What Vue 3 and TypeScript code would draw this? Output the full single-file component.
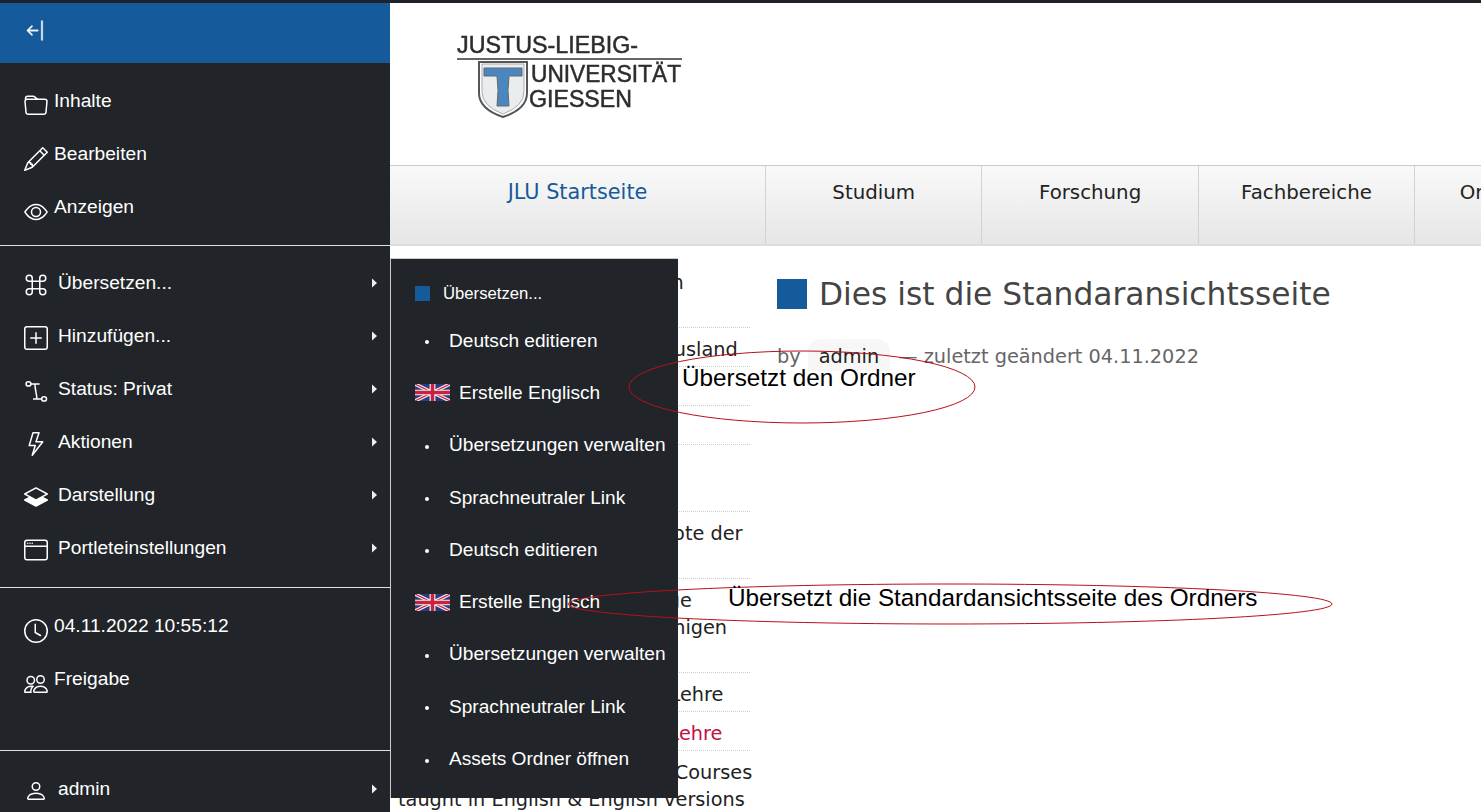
<script setup lang="ts">
interface NavItem { label: string; paths: string[]; caret?: boolean; wide?: boolean; stroke?: boolean }
interface SubItem { label: string; flag?: boolean }
interface SideItem { lines: string[]; red?: boolean }

const folder = ['M.54 3.87.5 3a2 2 0 0 1 2-2h3.672a2 2 0 0 1 1.414.586l.828.828A2 2 0 0 0 9.828 3h3.982a2 2 0 0 1 1.992 2.181l-.637 7A2 2 0 0 1 13.174 14H2.826a2 2 0 0 1-1.991-1.819l-.637-7a1.99 1.99 0 0 1 .342-1.31zM2.19 4a1 1 0 0 0-.996 1.09l.637 7a1 1 0 0 0 .995.91h10.348a1 1 0 0 0 .995-.91l.637-7A1 1 0 0 0 13.81 4H2.19zm4.69-1.707A1 1 0 0 0 6.172 2H2.5a1 1 0 0 0-1 .981l.006.139C1.72 3.042 1.95 3 2.19 3h5.396l-.707-.707z']
const pencil = ['M12.146.146a.5.5 0 0 1 .708 0l3 3a.5.5 0 0 1 0 .708l-10 10a.5.5 0 0 1-.168.11l-5 2a.5.5 0 0 1-.65-.65l2-5a.5.5 0 0 1 .11-.168l10-10zM11.207 2.5 13.5 4.793 14.793 3.5 12.5 1.207 11.207 2.5zm1.586 3L10.5 3.207 4 9.707V10h.5a.5.5 0 0 1 .5.5v.5h.5a.5.5 0 0 1 .5.5v.5h.293l6.5-6.5zm-9.761 5.175-.106.106-1.528 3.821 3.821-1.528.106-.106A.5.5 0 0 1 5 12.5V12h-.5a.5.5 0 0 1-.5-.5V11h-.5a.5.5 0 0 1-.468-.325z']
const eye = ['M16 8s-3-5.5-8-5.5S0 8 0 8s3 5.5 8 5.5S16 8 16 8zM1.173 8a13.133 13.133 0 0 1 1.66-2.043C4.12 4.668 5.88 3.5 8 3.5c2.12 0 3.879 1.168 5.168 2.457A13.133 13.133 0 0 1 14.828 8c-.058.087-.122.183-.195.288-.335.48-.83 1.12-1.465 1.755C11.879 11.332 10.119 12.5 8 12.5c-2.12 0-3.879-1.168-5.168-2.457A13.134 13.134 0 0 1 1.172 8z', 'M8 5.5a2.5 2.5 0 1 0 0 5 2.5 2.5 0 0 0 0-5zM4.5 8a3.5 3.5 0 1 1 7 0 3.5 3.5 0 0 1-7 0z']
const command = ['M3.5 2A1.5 1.5 0 0 1 5 3.5V5H3.5a1.5 1.5 0 1 1 0-3zM6 5V3.5A2.5 2.5 0 1 0 3.5 6H5v4H3.5A2.5 2.5 0 1 0 6 12.5V11h4v1.5a2.5 2.5 0 1 0 2.5-2.5H11V6h1.5A2.5 2.5 0 1 0 10 3.5V5H6zm4 1v4H6V6h4zm1-1V3.5A1.5 1.5 0 1 1 12.5 5H11zm0 6h1.5a1.5 1.5 0 1 1-1.5 1.5V11zm-6 0v1.5A1.5 1.5 0 1 1 3.5 11H5z']
const plus = ['M14 1a1 1 0 0 1 1 1v12a1 1 0 0 1-1 1H2a1 1 0 0 1-1-1V2a1 1 0 0 1 1-1h12zM2 0a2 2 0 0 0-2 2v12a2 2 0 0 0 2 2h12a2 2 0 0 0 2-2V2a2 2 0 0 0-2-2H2z', 'M8 4a.5.5 0 0 1 .5.5v3h3a.5.5 0 0 1 0 1h-3v3a.5.5 0 0 1-1 0v-3h-3a.5.5 0 0 1 0-1h3v-3A.5.5 0 0 1 8 4z']
const status = ['M4.6 3.3H10.4M7.3 3.3C7.3 7 8.4 9.5 8.6 13.3M6 13.3H12', 'M4.6 3.3a1.6 1.4 0 1 1-3.2 0a1.6 1.4 0 1 1 3.2 0ZM15 13.3a1.6 1.4 0 1 1-3.2 0a1.6 1.4 0 1 1 3.2 0Z']
const lightning = ['M5.52.359A.5.5 0 0 1 6 0h4a.5.5 0 0 1 .474.658L8.694 6H12.5a.5.5 0 0 1 .395.807l-7 9a.5.5 0 0 1-.873-.454L6.823 9.5H3.5a.5.5 0 0 1-.48-.641l2.5-8.5zM6.374 1 4.168 8.5H7.5a.5.5 0 0 1 .478.647L6.78 13.04 11.478 7H8a.5.5 0 0 1-.474-.658L9.306 1H6.374z']
const layers = ['M8.235 1.559a.5.5 0 0 0-.47 0l-7.5 4a.5.5 0 0 0 0 .882L3.188 8 .264 9.559a.5.5 0 0 0 0 .882l7.5 4a.5.5 0 0 0 .47 0l7.5-4a.5.5 0 0 0 0-.882L12.813 8l2.922-1.559a.5.5 0 0 0 0-.882l-7.5-4zM8 9.433 1.562 6 8 2.567 14.438 6 8 9.433z']
const windowIcon = ['M2.5 4a.5.5 0 1 0 0-1 .5.5 0 0 0 0 1zm2-.5a.5.5 0 1 1-1 0 .5.5 0 0 1 1 0zm1 .5a.5.5 0 1 0 0-1 .5.5 0 0 0 0 1z', 'M2 1a2 2 0 0 0-2 2v10a2 2 0 0 0 2 2h12a2 2 0 0 0 2-2V3a2 2 0 0 0-2-2H2zm13 2v2H1V3a1 1 0 0 1 1-1h12a1 1 0 0 1 1 1zM2 14a1 1 0 0 1-1-1V6h14v7a1 1 0 0 1-1 1H2z']
const clock = ['M8 3.5a.5.5 0 0 0-1 0V9a.5.5 0 0 0 .252.434l3.5 2a.5.5 0 0 0 .496-.868L8 8.71V3.5z', 'M8 16A8 8 0 1 0 8 0a8 8 0 0 0 0 16zm7-8A7 7 0 1 1 1 8a7 7 0 0 1 14 0z']
const people = ['M15 14s1 0 1-1-1-4-5-4-5 3-5 4 1 1 1 1h8Zm-7.978-1A.261.261 0 0 1 7 12.996c.001-.264.167-1.03.76-1.72C8.312 10.629 9.282 10 11 10c1.717 0 2.687.63 3.24 1.276.593.69.758 1.457.76 1.72l-.008.002a.274.274 0 0 1-.014.002H7.022ZM11 7a2 2 0 1 0 0-4 2 2 0 0 0 0 4Zm3-2a3 3 0 1 1-6 0 3 3 0 0 1 6 0ZM6.936 9.28a5.88 5.88 0 0 0-1.23-.247A7.35 7.35 0 0 0 5 9c-4 0-5 3-5 4 0 .667.333 1 1 1h4.216A2.238 2.238 0 0 1 5 13c0-1.01.377-2.042 1.09-2.904.243-.294.526-.569.846-.816ZM4.92 10A5.493 5.493 0 0 0 4 13H1c0-.26.164-1.03.76-1.724.545-.636 1.492-1.256 3.16-1.275ZM1.5 5.5a3 3 0 1 1 6 0 3 3 0 0 1-6 0Zm3-2a2 2 0 1 0 0 4 2 2 0 0 0 0-4Z']
const person = ['M8 8a3 3 0 1 0 0-6 3 3 0 0 0 0 6Zm2-3a2 2 0 1 1-4 0 2 2 0 0 1 4 0Zm4 8c0 1-1 1-1 1H3s-1 0-1-1 1-4 6-4 6 3 6 4Zm-1-.004c-.001-.246-.154-.986-.832-1.664C11.516 10.68 10.289 10 8 10c-2.29 0-3.516.68-4.168 1.332-.678.678-.83 1.418-.832 1.664h10Z']

const sections: { cls: string; items: NavItem[] }[] = [
  { cls: 'sec-a', items: [
    { label: 'Inhalte', paths: folder },
    { label: 'Bearbeiten', paths: pencil },
    { label: 'Anzeigen', paths: eye },
  ] },
  { cls: 'sec-b', items: [
    { label: 'Übersetzen...', paths: command, caret: true, wide: true },
    { label: 'Hinzufügen...', paths: plus, caret: true, wide: true },
    { label: 'Status: Privat', paths: status, caret: true, wide: true, stroke: true },
    { label: 'Aktionen', paths: lightning, caret: true, wide: true },
    { label: 'Darstellung', paths: layers, caret: true, wide: true },
    { label: 'Portleteinstellungen', paths: windowIcon, caret: true, wide: true },
  ] },
  { cls: 'sec-c', items: [
    { label: '04.11.2022 10:55:12', paths: clock },
    { label: 'Freigabe', paths: people },
  ] },
  { cls: 'sec-d', items: [
    { label: 'admin', paths: person, caret: true, wide: true },
  ] },
]

const subItems: SubItem[] = [
  { label: 'Deutsch editieren' },
  { label: 'Erstelle Englisch', flag: true },
  { label: 'Übersetzungen verwalten' },
  { label: 'Sprachneutraler Link' },
  { label: 'Deutsch editieren' },
  { label: 'Erstelle Englisch', flag: true },
  { label: 'Übersetzungen verwalten' },
  { label: 'Sprachneutraler Link' },
  { label: 'Assets Ordner öffnen' },
]

const sideItems: SideItem[] = [
  { lines: ['Studienort und Informationen', 'für Studierende'] },
  { lines: ['Studium und Praktikum im Ausland'] },
  { lines: ['Studienfächer'] },
  { lines: ['Bewerbung'] },
  { lines: ['Hochschulstandort Gießen', 'und Umgebung'] },
  { lines: ['Internationale Studienangebote der', 'Universität'] },
  { lines: ['Internationales Studienkollege', 'Ein Studienangebot für diejenigen', 'die weiterstudieren'] },
  { lines: ['Qualitätsentwicklung in der Lehre'] },
  { lines: ['Innovationen im Studium & Lehre'], red: true },
  { lines: ["Bachelor's Programmes and Courses", 'taught in English & English versions'] },
]

const tabs: string[] = ['JLU Startseite', 'Studium', 'Forschung', 'Fachbereiche', 'Organisation']
</script>

<template>
  <div class="page">
    <aside class="sidebar">
      <div class="collapse">
        <svg class="back" viewBox="0 0 16 16" fill="currentColor" stroke="currentColor" stroke-width="0.3"><path d="M12.5 15a.5.5 0 0 1-.5-.5v-13a.5.5 0 0 1 1 0v13a.5.5 0 0 1-.5.5ZM10 8a.5.5 0 0 1-.5.5H3.707l2.147 2.146a.5.5 0 0 1-.708.708l-3-3a.5.5 0 0 1 0-.708l3-3a.5.5 0 1 1 .708.708L3.707 7.5H9.5a.5.5 0 0 1 .5.5Z"/></svg>
      </div>
      <nav v-for="sec in sections" :key="sec.cls" class="section" :class="sec.cls">
        <a v-for="item in sec.items" :key="item.label" class="nav-item" :class="{ wide: item.wide }">
          <svg class="icon" viewBox="0 0 16 16" :fill="item.stroke ? 'none' : 'currentColor'" :stroke="item.stroke ? 'currentColor' : 'none'" :stroke-width="item.stroke ? 1 : 0">
            <path v-for="(d, i) in item.paths" :key="i" :d="d" />
          </svg>
          <span class="nav-label">{{ item.label }}</span>
          <svg v-if="item.caret" class="caret" viewBox="0 0 5 10" fill="currentColor"><path d="M0 0.4 5 5 0 9.6Z"/></svg>
        </a>
      </nav>
    </aside>

    <main class="main">
      <header class="brand">
        <svg class="logo" width="226" height="84" viewBox="0 0 226 84">
          <text x="0" y="18" class="logo-text" textLength="181" lengthAdjust="spacingAndGlyphs">JUSTUS-LIEBIG-</text>
          <rect x="0" y="23" width="225" height="2" fill="#666" />
          <path d="M22 27H70V58Q70 74 46 82Q22 74 22 58Z" fill="#fff" stroke="#555" stroke-width="2" />
          <path d="M25 29H67V57Q67 71 46 79Q25 71 25 57Z" fill="#e9edf0" stroke="#aaa" stroke-width="1" />
          <path d="M27 33H65V41H52Q50 55 52 71H40Q42 55 40 41H27Z" fill="#4a86c0" stroke="#666" stroke-width="1" />
          <text x="74" y="47" class="logo-text" textLength="150" lengthAdjust="spacingAndGlyphs">UNIVERSITÄT</text>
          <text x="72" y="72" class="logo-text" textLength="103" lengthAdjust="spacingAndGlyphs">GIESSEN</text>
        </svg>
      </header>

      <div class="tabs">
        <a v-for="(tab, i) in tabs" :key="tab" class="tab" :class="{ first: i === 0 }">{{ tab }}</a>
      </div>

      <div class="body">
        <ul class="side">
          <li v-for="(s, i) in sideItems" :key="i" class="side-item" :class="{ red: s.red }">
            <span v-for="line in s.lines" :key="line" class="side-line">{{ line }}</span>
          </li>
        </ul>
        <article class="content">
          <h1 class="title"><span class="square"></span>Dies ist die Standaransichtsseite</h1>
          <p class="byline">by <span class="author">admin</span> — zuletzt geändert 04.11.2022</p>
        </article>
      </div>
    </main>

    <div class="popup">
      <div class="popup-head"><span class="popup-square"></span>Übersetzen...</div>
      <a v-for="(sub, i) in subItems" :key="i" class="sub-item">
        <svg v-if="sub.flag" class="flag" viewBox="0 0 60 30" preserveAspectRatio="none">
          <rect width="60" height="30" fill="#2b3a7c" />
          <path d="M0 0 60 30M60 0 0 30" stroke="#f4f0f0" stroke-width="6" />
          <path d="M0 0 60 30M60 0 0 30" stroke="#c8223f" stroke-width="2" />
          <path d="M30 0V30M0 15H60" stroke="#f4f0f0" stroke-width="10" />
          <path d="M30 0V30M0 15H60" stroke="#c8223f" stroke-width="6" />
        </svg>
        <span v-else class="bullet"></span>
        <span>{{ sub.label }}</span>
      </a>
    </div>

    <svg class="marks" width="1481" height="812" viewBox="0 0 1481 812" fill="none" stroke="#b5121b">
      <ellipse cx="802" cy="387" rx="173" ry="36" />
      <ellipse cx="950" cy="604" rx="382" ry="20" />
    </svg>
    <span class="note note-a">Übersetzt den Ordner</span>
    <span class="note note-b">Übersetzt die Standardansichtsseite des Ordners</span>
  </div>
</template>

<style>
html, body { margin: 0; background: #fff; overflow: hidden; }
</style>

<style scoped>
.page {
  position: relative;
  display: flex;
  height: 812px;
  overflow: hidden;
  border-top: 3px solid #1f2329;
  box-sizing: border-box;
  font-family: "DejaVu Sans", sans-serif;
  background: #fff;
}
.sidebar {
  flex: 0 0 390px;
  display: flex;
  flex-direction: column;
  background: #212529;
  color: #fff;
  font-family: "Liberation Sans", Arial, sans-serif;
  font-size: 19.2px;
}
.collapse {
  height: 60px;
  flex: none;
  box-sizing: border-box;
  background: #155a9a;
  display: flex;
  align-items: center;
  padding: 0 0 6px 24px;
  color: #f0f5fa;
}
.back { width: 23px; height: 23px; }
.section { display: flex; flex-direction: column; flex: none; }
.sec-a { padding: 11px 0 12px; border-bottom: 1px solid #dee2e6; height: 183px; box-sizing: border-box; }
.sec-b { padding: 11px 0 12px; border-bottom: 1px solid #dee2e6; height: 342px; box-sizing: border-box; }
.sec-c { padding: 11px 0 0; border-bottom: 1px solid #dee2e6; height: 163px; box-sizing: border-box; }
.sec-d { padding: 11px 0 0; }
.nav-item {
  height: 53px;
  flex: none;
  display: flex;
  align-items: center;
  padding: 0 13px 0 24px;
}
.sec-b .nav-item { height: 52.9px; }
.icon { width: 24px; height: 24px; margin-top: 10px; flex: none; }
.nav-label { margin-left: 6px; flex: 1; }
.wide .nav-label { margin-left: 10px; }
.wide .icon { margin-top: 4px; }
.caret { width: 5px; height: 10px; flex: none; color: #eee; }

.main { flex: 1; min-width: 0; display: flex; flex-direction: column; }
.brand { height: 162px; flex: none; padding: 32px 0 0 67px; box-sizing: border-box; }
.logo { display: block; filter: blur(0.35px); overflow: visible; }
.logo-text { font-family: "Liberation Sans", Arial, sans-serif; font-size: 23.5px; fill: #2c2c2c; stroke: #2c2c2c; stroke-width: 0.5px; }
.tabs {
  height: 81px;
  flex: none;
  display: flex;
  box-sizing: border-box;
  border-top: 1px solid #ccc;
  border-bottom: 2px solid #ddd;
  background: linear-gradient(#f9f9f9, #e6e6e6);
  overflow: hidden;
  font-size: 19.8px;
  color: #222;
}
.tab {
  flex: 0 0 216.4px;
  box-sizing: border-box;
  text-align: center;
  padding-top: 15px;
  border-left: 1px solid #d2d2d2;
  white-space: nowrap;
}
.tab.first { flex-basis: 375px; color: #155a9a; border-left: none; font-size: 20.8px; padding-top: 14px; }
.body { flex: 1; display: flex; min-height: 0; }
.side {
  list-style: none;
  margin: 15px 0 0 8px;
  padding: 0;
  width: 352px;
  flex: none;
  font-size: 19.3px;
  color: #222;
}
.side-item {
  padding: 8px 0 3px;
  border-bottom: 1px dotted #ccc;
  line-height: 27.3px;
}
.side-line { display: block; white-space: nowrap; }
.side-item.red { color: #c4103f; }
.content { margin-left: 27px; flex: 1; min-width: 0; }
.title {
  margin: 28px 0 0;
  display: flex;
  align-items: center;
  font-size: 31.3px;
  font-weight: 400;
  line-height: 40px;
  color: #444;
  white-space: nowrap;
}
.square { width: 30px; height: 30px; background: #155a9a; margin-right: 12px; flex: none; }
.byline { margin: 29px 0 0; font-size: 19.3px; line-height: 28px; color: #666; white-space: nowrap; }
.author {
  display: inline-block;
  color: #222;
  background: #f7f7f7;
  padding: 4px 11px 0;
  margin: -4px 2px 0 1px;
  border-radius: 13px 13px 0 0;
}

.popup {
  position: absolute;
  left: 390px;
  top: 255px;
  width: 288px;
  height: 540px;
  box-sizing: border-box;
  background: #212529;
  border-left: 1px solid #ccc;
  border-top: 1px solid #ccc;
  color: #fff;
  font-family: "Liberation Sans", Arial, sans-serif;
  font-size: 19.1px;
}
.popup-head {
  height: 55.5px;
  display: flex;
  align-items: center;
  padding: 14px 0 0 24px;
  box-sizing: border-box;
  font-size: 16.7px;
}
.popup-square { width: 15px; height: 15px; background: #155a9a; margin-right: 13px; }
.sub-item {
  height: 52.3px;
  display: flex;
  align-items: center;
  padding-left: 24px;
  white-space: nowrap;
}
.bullet { width: 4px; height: 4px; border-radius: 50%; background: #fff; margin: 3px 20px 0 10px; flex: none; }
.flag { width: 35px; height: 17px; margin-right: 9px; flex: none; }
.marks { position: absolute; left: 0; top: -3px; pointer-events: none; }
.note {
  position: absolute;
  font-family: "Liberation Sans", Arial, sans-serif;
  font-size: 24.3px;
  color: #000;
  white-space: nowrap;
  line-height: 28px;
}
.note-a { left: 682px; top: 361px; }
.note-b { left: 728px; top: 581px; }
</style>
